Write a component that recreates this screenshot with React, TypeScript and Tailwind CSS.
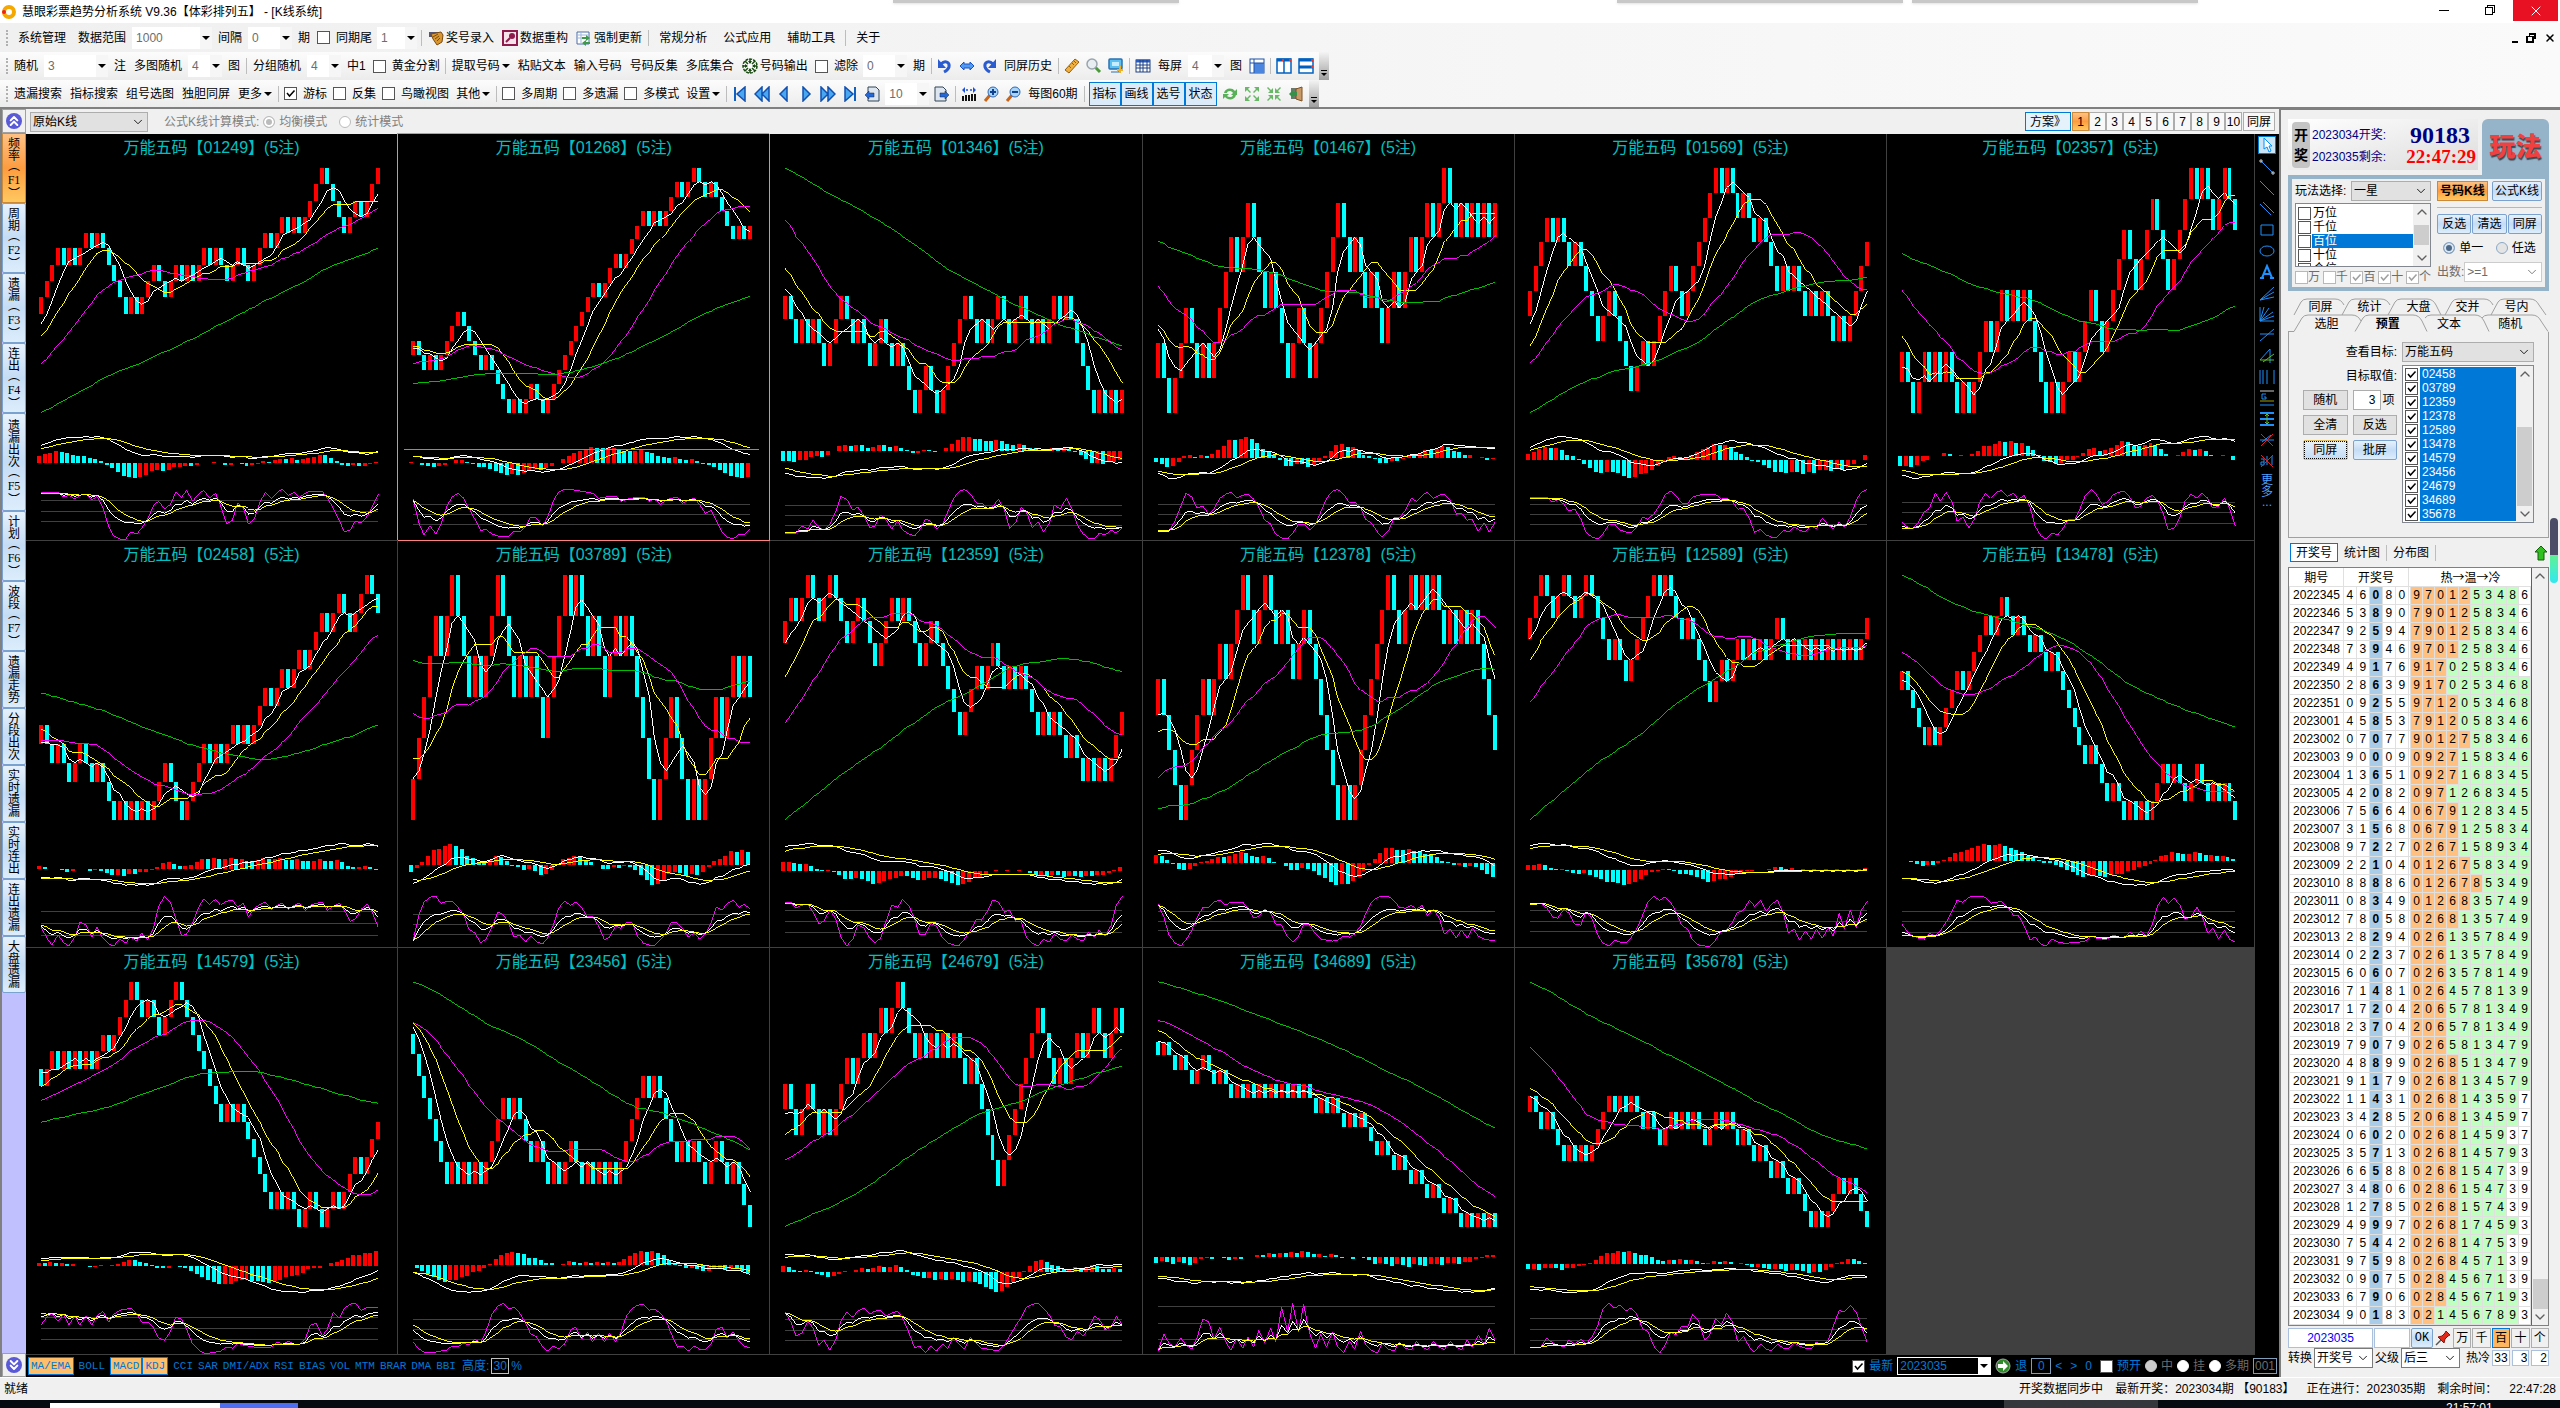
import type { ReactNode } from "react";
import { ChevronDown, ChevronUp, ChevronsDown, ChevronsUp, X } from "lucide-react";

type Chart = { code: string; start: number; ma: number[]; steps: string; active?: boolean };

// start: opening level, ma: 5/10/20/60 averages at the first bar, steps: one letter per draw
const charts: Chart[] = [
    { code: "01249", start: 0, ma: [-0.65, -1.4, -3.1, -6.1], steps: "UUUUDUDUUDUDDDDDUDUUUDDUUDUDUUDUDDUUDDUUUDUUDUDUUUUDDDDUUDUUU" },
    { code: "01268", start: 4, ma: [4.5, 4.6, 3.4, 2], steps: "UDDUDUUUUDDDDUDDDDUDUUDDUUUUUUUUUDUUUDUUUUDUDUUUDUUDDUDDDDUDU", active: true },
    { code: "01346", start: 4, ma: [5.3, 6.2, 8.3, 10.5], steps: "UDDUDUDDUUUDDUDDUUDDUDDDUUDDUUUUUDDUDUUDDUUDDUDUUDUDDDDDUDUDU" },
    { code: "01467", start: 1, ma: [2.4, 2.5, 3.6, 4.9], steps: "UDDUUUDDUDUUUUDUUDDDUDDDUUDDUUUUUDDUDDUDDUUDUUDUUDUUDDUDUDUDU" },
    { code: "01569", start: 3, ma: [2.7, 1.8, 1.1, -0.9], steps: "UUUUDUDDUDDDDUUDDDDUUDUUUUDDUUUUUUDUDDUDDUDDDUDUDDUDUDDUDUUUU" },
    { code: "02357", start: 1, ma: [1.5, 2.5, 4, 5.2], steps: "UDDUUDUDUDDUDUUUDUUDUDUDDDDUDUUDUUUDDUUUUDDUUUDDDUUUUDUDDUUDD" },
    { code: "02458", start: 4, ma: [4.1, 4.8, 4.2, 6.7], steps: "UDDUDDUUDDUDDDUDUDUDUUUDDDUUUUDUDUUDUDUUUDUUDUUDUUUDUUDDUUUDD" },
    { code: "03789", start: 0, ma: [1, 1.5, 2.6, 3.9], steps: "UUUUUDUUDDDUDUUUDDDUDUDDUUUUDUDDUDDUUDUDDDDDUUUDDDUDUUUDUUDUD" },
    { code: "12359", start: 6, ma: [6, 4.5, 2.5, -1.7], steps: "UUDUUDDUUDDDUUDDDUUUDUDDDUUDDDDDUUUDUUDDUDUDDDUDUDDUDDUDUDUUU" },
    { code: "12378", start: 3, ma: [3, 2.5, 1.2, 0.3], steps: "UDDDDUUUUDUUDUUUDDUUDDUDDUUDDDDDDUDUUUUUUUDDUUDUDUDDUDUDUDDDD" },
    { code: "12589", start: 3, ma: [3, 2, 0, -5.5], steps: "UUUDDUUDDUUDDDDUDDUUUUUDUDDDUDDDDUUDUUDUDUDUUDDUDUDUDUDUDUDUU" },
    { code: "13478", start: 7, ma: [7.5, 8, 9, 13.2], steps: "UDDDDUDUUUUDUUUUDUUDDUDDUDDUDDDDDDUDDDUDDUDUDUUUDUDDUUDDUDUDD" },
    { code: "14579", start: 9, ma: [8.8, 8, 7.2, 6], steps: "DUUDUDUDUDUUDUUUUDDUDDUUUDDDDDDDDUDUDDDDDDUDUDDUUDDUUDUUUDUUU" },
    { code: "23456", start: 9, ma: [9.3, 9.5, 9.5, 11.4], steps: "DDDDDDDUDUDUDUUUUDUDDDUDDUDUUDDUDUDUDUUUUUDUDDDDUDUDDUUDDUDDD" },
    { code: "24679", start: 3, ma: [2.8, 2, 1, -1.6], steps: "UDDUUDDUDUUUDUUDUUDUUDDDUDUDUDUDDUDDDDDUUUUUUUDDDUDUUDUUDDUUD" },
    { code: "34689", start: 13, ma: [13, 13.8, 14.5, 17.2], steps: "DUDDUDDUUDDUDDUDUDUDUDUDUDUDDUDUDDUDUDDDUDDUDDUDDUDDUDDUDUDUD" },
    { code: "35678", start: 7, ma: [8, 8.5, 11, 15], steps: "UDDUDDDUDUDUUUUDUDUDDUDDUUDUDUDDUUDUDDUDDUDDUDDUDDDUDUUUDUDDD" },
];

const BARS = 61;
const X0 = 15;
const DX = 338 / 60;

const mean = (values: number[], end: number, n: number) => {
    let sum = 0;
    for (let i = end - n + 1; i <= end; i++) sum += values[i];
    return sum / n;
};

const ema = (values: number[], n: number) => {
    const out = [values[0]];
    for (let i = 1; i < values.length; i++) out.push(out[i - 1] + ((values[i] - out[i - 1]) * 2) / (n + 1));
    return out;
};

const compute = (chart: Chart) => {
    const closes: number[] = [];
    let level = chart.start;
    for (const s of chart.steps) {
        level += s === "U" ? 1 : -1;
        closes.push(level);
    }
    const [m5, m10, m20, m60] = chart.ma;
    const b1 = (m5 * 5 - closes[0]) / 4;
    const b2 = 2 * m10 - m5;
    const b3 = 2 * m20 - m10;
    const b4 = 1.5 * m60 - 0.5 * m20;
    const history = [
        ...Array(40).fill(b4),
        ...Array(10).fill(b3),
        ...Array(5).fill(b2),
        ...Array(4).fill(b1),
    ] as number[];
    const all = [...history, ...closes];
    const off = history.length;
    const line = (n: number) => closes.map((_, i) => mean(all, off + i, n));

    const fast = ema(all, 12);
    const slow = ema(all, 26);
    const dif = all.map((_, i) => fast[i] - slow[i]);
    const dea = ema(dif, 9);

    let k = 50;
    let d = 50;
    const kdj = all.map((c, i) => {
        const win = all.slice(Math.max(0, i - 9), i + 1);
        const lo = Math.min(...win);
        const hi = Math.max(...win);
        const rsv = hi === lo ? 50 : ((c - lo) / (hi - lo)) * 100;
        k = (2 * k + rsv) / 3;
        d = (2 * d + k) / 3;
        return [k, d, 3 * k - 2 * d];
    });

    return {
        closes,
        ma: [line(5), line(10), line(20), line(60)],
        dif: dif.slice(off),
        dea: dea.slice(off),
        hist: dif.slice(off).map((v, i) => (v - dea[off + i]) * 2),
        kdj: [0, 1, 2].map((n) => kdj.slice(off).map((v) => v[n])),
    };
};

const scale = (values: number[], top: number, bottom: number) => {
    const lo = Math.min(...values);
    const hi = Math.max(...values);
    return (v: number) => Math.round(bottom - ((v - lo) / (hi - lo)) * (bottom - top));
};

const Line = ({ values, y, color }: { values: number[]; y: (v: number) => number; color: string }) => (
    <polyline
        fill="none"
        stroke={color}
        strokeWidth="1"
        points={values.map((v, i) => `${Math.round(X0 + i * DX)},${y(v)}`).join(" ")}
    />
);

const KChart = ({ chart }: { chart: Chart }) => {
    const c = compute(chart);
    const opens = [chart.start, ...c.closes.slice(0, BARS - 1)];
    const y = scale([...opens, ...c.closes, ...c.ma.flat()], 34, 280);
    const ym = scale([...c.dif, ...c.dea, ...c.hist, 0], 304, 346);
    const yk = scale([...c.kdj.flat(), 20, 80], 357, 407);
    return (
        <section className={`relative contain-size border-r border-b ${chart.active ? "z-10 border-[#ff8080] shadow-[-1px_-1px_0_#ff8080]" : "border-[#404040]"}`}>
            <h3 className="absolute inset-x-0 top-0.5 text-center text-base leading-6 text-[#00c0c0]">
                万能五码【{chart.code}】(5注)
            </h3>
            <svg viewBox="0 0 372 408" preserveAspectRatio="none" className="block size-full" shapeRendering="crispEdges">
                {c.closes.map((v, i) => {
                    const up = v > opens[i];
                    const top = y(Math.max(v, opens[i]));
                    return (
                        <rect key={i} x={Math.round(X0 + i * DX) - 2} y={top} width="4" height={y(Math.min(v, opens[i])) - top} fill={up ? "#ff0000" : "#00ffff"} />
                    );
                })}
                <Line values={c.ma[0]} y={y} color="#ffffff" />
                <Line values={c.ma[1]} y={y} color="#ffff00" />
                <Line values={c.ma[2]} y={y} color="#ff00ff" />
                <Line values={c.ma[3]} y={y} color="#00c000" />
                {c.hist.map((v, i) => (
                    <rect
                        key={i}
                        x={Math.round(X0 + i * DX) - 4}
                        y={Math.min(ym(v), ym(0))}
                        width="4"
                        height={Math.abs(ym(v) - ym(0))}
                        fill={v > (c.hist[i - 1] ?? 0) ? "#ff0000" : "#00ffff"}
                    />
                ))}
                <Line values={c.dif} y={ym} color="#ffffff" />
                <Line values={c.dea} y={ym} color="#ffff00" />
                {[80, 50, 20].map((v) => (
                    <line key={v} x1={X0} x2={X0 + 338} y1={yk(v)} y2={yk(v)} stroke="#404040" />
                ))}
                <Line values={c.kdj[2]} y={yk} color="#ff00ff" />
                <Line values={c.kdj[0]} y={yk} color="#ffffff" />
                <Line values={c.kdj[1]} y={yk} color="#ffff00" />
                {chart.active && <line x1="6" x2="362" y1="317" y2="317" stroke="#8080ff" />}
            </svg>
        </section>
    );
};

const glyphs: Record<string, ReactNode> = {
    hand: <><path d="M1 2h9v5H1z" fill="#557" /><path d="M3 4l10-2 2 3-1 7-5 3-4-6z" fill="#d9962f" stroke="#7a4a10" /><path d="M5 7l5-3M7 9l4-3M9 11l3-3" stroke="#7a4a10" /></>,
    key: <><rect x="1" y="1" width="14" height="14" fill="#f7e3ea" stroke="#8e1b4b" strokeWidth="2" /><circle cx="10" cy="6" r="3" fill="#8e1b4b" /><path d="M8 8l-4 4" stroke="#8e1b4b" strokeWidth="2" /></>,
    sheet: <><path d="M1 2h12v12H1z" fill="#fff" stroke="#4a6ea9" /><path d="M1 5h12M1 8h12M5 2v12" stroke="#9db7dd" /><path d="M6 7h4V5l4 3-4 3V9H6zM14 12h-4v-2l-4 3 4 3v-2h4z" fill="#3c9b4b" /></>,
    wheel: <><circle cx="8" cy="8" r="7" fill="#fff" stroke="#184a10" strokeWidth="1.5" strokeDasharray="3 1" /><path d="M8 1v4M8 11v4M1 8h4M11 8h4M3 3l3 3M13 3l-3 3M3 13l3-3M13 13l-3-3" stroke="#184a10" strokeWidth="1.5" /><path d="M6 3l2 3 2-3M6 13l2-3 2 3M3 6l3 2-3 2M13 6l-3 2 3 2" fill="#184a10" /></>,
    undo: <><path d="M4 6c4-4 9-2 8 3-1 3-3 4-5 5" fill="none" stroke="#2a5cd0" strokeWidth="3" /><path d="M1 1v9h8z" fill="#2a5cd0" /></>,
    redo: <><path d="M12 6C8 2 3 4 4 9c1 3 3 4 5 5" fill="none" stroke="#2a5cd0" strokeWidth="3" /><path d="M15 1v9H7z" fill="#2a5cd0" /></>,
    both: <path d="M1 8l4-4v2h6V4l4 4-4 4v-2H5v2z" fill="#4f9bf0" stroke="#1c50c8" />,
    ruler: <><path d="M1 12L11 1l4 3L5 15z" fill="#f0b040" stroke="#96600c" /><path d="M5 8l2 2M8 5l2 2M10 3l2 2" stroke="#96600c" /></>,
    lens: <><path d="M9 9l5 5" stroke="#4a9a3a" strokeWidth="3" /><circle cx="6" cy="6" r="5" fill="#e8edf2" stroke="#9aa4ae" strokeWidth="1.5" /></>,
    screen: <><rect x="1" y="1" width="13" height="10" rx="1" fill="#5cc0f0" stroke="#2a70b0" strokeWidth="1.5" /><path d="M4 4h7v4H4z" fill="#c8ecff" /><path d="M3 14h8v-3" stroke="#2a70b0" fill="none" /><path d="M12 8v7M9 12h6" stroke="#f0b020" strokeWidth="2" /></>,
    grid: <><rect x="1" y="2" width="14" height="12" fill="#fff" stroke="#204080" /><path d="M1 3h14" stroke="#2a5cc0" strokeWidth="3" /><path d="M1 7h14M1 10h14M5 2v12M8 2v12M12 2v12" stroke="#204080" /></>,
    month: <><rect x="1" y="1" width="14" height="14" fill="#fff" stroke="#1c50a8" /><rect x="5" y="5" width="10" height="10" fill="#4a86e0" /><path d="M1 5h14M5 1v14" stroke="#1c50a8" /></>,
    cols: <><rect x="1" y="1" width="14" height="14" fill="#fff" stroke="#0060c0" strokeWidth="1.5" /><path d="M8 1v14" stroke="#0060c0" strokeWidth="1.5" /><path d="M1 2h14" stroke="#0060c0" strokeWidth="3" /><path d="M6 2h2M13 2h2" stroke="#f03020" strokeWidth="2" /></>,
    rows: <><rect x="1" y="1" width="14" height="14" fill="#fff" stroke="#0060c0" strokeWidth="1.5" /><path d="M1 2h14M1 9h14" stroke="#0060c0" strokeWidth="3" /><path d="M13 2h2M13 9h2" stroke="#f03020" strokeWidth="2" /></>,
    first: <><path d="M3 1v14" stroke="#1060c0" strokeWidth="2" /><path d="M13 1v14L5 8z" fill="#49a6f0" stroke="#1050b0" strokeWidth="1.5" /></>,
    rewind: <path d="M8 1v14L1 8zM15 1v14L8 8z" fill="#49a6f0" stroke="#1050b0" strokeWidth="1.5" />,
    prev: <path d="M11 1v14L4 8z" fill="#49a6f0" stroke="#1050b0" strokeWidth="1.5" />,
    next: <path d="M5 1v14l7-7z" fill="#49a6f0" stroke="#1050b0" strokeWidth="1.5" />,
    forward: <path d="M1 1v14l7-7zM8 1v14l7-7z" fill="#49a6f0" stroke="#1050b0" strokeWidth="1.5" />,
    last: <><path d="M13 1v14" stroke="#1060c0" strokeWidth="2" /><path d="M3 1v14l8-7z" fill="#49a6f0" stroke="#1050b0" strokeWidth="1.5" /></>,
    pageBack: <><path d="M4 1h8l3 3v11H4z" fill="#dde6f0" stroke="#345" /><path d="M1 9l4-4v2h5v4H5v2z" fill="#2468d8" stroke="#124" strokeWidth=".5" /></>,
    pageNext: <><path d="M1 1h8l3 3v11H1z" fill="#dde6f0" stroke="#345" /><path d="M15 9l-4-4v2H6v4h5v2z" fill="#2468d8" stroke="#124" strokeWidth=".5" /></>,
    bars: <><path d="M2 15v-5M5 15V9M8 15v-6M11 15V8M14 15V8" stroke="#111" strokeWidth="2" /><path d="M1 4l3-3v6zM15 4l-3-3v6z" fill="#1c50e0" /><path d="M5 4h2M9 4h2" stroke="#1c50e0" strokeWidth="1.5" /></>,
    zoomIn: <><path d="M7 9l-5 6" stroke="#c86418" strokeWidth="3" /><circle cx="10" cy="6" r="5" fill="#a8d4f8" stroke="#2c68b8" /><path d="M10 3v6M7 6h6" stroke="#104090" strokeWidth="2" /></>,
    zoomOut: <><path d="M7 9l-5 6" stroke="#c86418" strokeWidth="3" /><circle cx="10" cy="6" r="5" fill="#a8d4f8" stroke="#2c68b8" /><path d="M7 6h6" stroke="#104090" strokeWidth="2" /></>,
    sync: <path d="M2 7c1-5 8-6 11-2l2-2v6H9l2-2C9 4 5 5 5 7zM14 9c-1 5-8 6-11 2l-2 2V8h6l-2 2c2 2 6 1 6-1z" fill="#58b058" />,
    expand: <path d="M1 1h5L4 3l3 3-1 1-3-3-2 2zM15 1v5l-2-2-3 3-1-1 3-3-2-2zM1 15v-5l2 2 3-3 1 1-3 3 2 2zM15 15h-5l2-2-3-3 1-1 3 3 2-2z" fill="#68b868" />,
    shrink: <path d="M7 7H2l2-2-3-3 1-1 3 3 2-2zM9 7V2l2 2 3-3 1 1-3 3 2 2zM7 9v5l-2-2-3 3-1-1 3-3-2-2zM9 9h5l-2 2 3 3-1 1-3-3-2 2z" fill="#68b868" />,
    door: <><path d="M3 2h7v11H3z" fill="#6f786f" /><path d="M8 3l6-2v14l-6-2z" fill="#c89a68" stroke="#805020" /><path d="M1 8l4-4v2h4v4H5v2z" fill="#389048" /></>,
    go: <><circle cx="8" cy="8" r="7" fill="#2f8a2a" stroke="#a8a8a8" /><path d="M3 6h5V3l5 5-5 5v-3H3z" fill="#fff" /></>,
    pin: <><path d="M1 15l6-6" stroke="#555" strokeWidth="1.5" /><path d="M3 7l4-1 3-3 1-2 4 4-2 1-3 3-1 4z" fill="#e02818" stroke="#901008" /></>,
    up: <path d="M8 1l6 6h-3v8H5V7H2z" fill="#30c020" stroke="#106008" />,
};

const Icon = ({ name }: { name: string }) => (
    <svg viewBox="0 0 16 16" className="size-4 shrink-0">{glyphs[name]}</svg>
);

const Sep = () => <span className="h-4 w-px bg-[#bdbdbd]" />;
const Grip = () => <span className="ml-1.5 h-4 border-l-2 border-dotted border-[#b0b0b0]" />;
const Txt = ({ children, menu }: { children: ReactNode; menu?: boolean }) => (
    <button className={`flex items-center gap-0.5 whitespace-nowrap ${menu ? "px-1.5" : "px-0.5"}`}>{children}</button>
);
const IconBtn = ({ name }: { name: string }) => (
    <button aria-label={name} className="px-px"><Icon name={name} /></button>
);
const Caret = () => <span className="border-x-4 border-t-4 border-x-transparent border-t-black" />;

const Drop = ({ value, width, label }: { value: string; width: string; label: string }) => (
    <span className={`relative flex h-[22px] items-center bg-white ${width}`}>
        <select aria-label={label} className="size-full appearance-none bg-transparent pl-1 text-[#6d6d6d] outline-none">
            <option>{value}</option>
        </select>
        <span className="pointer-events-none absolute inset-y-0 right-0 flex w-3 items-center justify-center bg-[#f6f6f6]"><Caret /></span>
    </span>
);

const Tick = ({ label, checked }: { label: string; checked?: boolean }) => (
    <label className="flex items-center gap-1.5 whitespace-nowrap px-px">
        <Box checked={checked} />
        {label}
    </label>
);

const Box = ({ checked, muted, label }: { checked?: boolean; muted?: boolean; label?: string }) => (
    <span className={`relative size-[13px] shrink-0 border bg-white ${muted ? "border-[#b8b8b8] text-[#a0a0a0]" : "border-[#555555] text-black"}`}>
        <input type="checkbox" aria-label={label} defaultChecked={checked} disabled={muted} className="absolute inset-0 appearance-none" />
        {checked && (
            <svg viewBox="0 0 11 11" className="pointer-events-none absolute inset-0"><path d="M2 5l2.500 3L9.500 2.500" fill="none" stroke="currentColor" strokeWidth="1.500" /></svg>
        )}
    </span>
);

const Radio = ({ label, name, checked, tone }: { label: string; name: string; checked?: boolean; tone: string }) => (
    <label className="flex items-center gap-1">
        <input type="radio" name={name} defaultChecked={checked} className={`size-3 appearance-none rounded-full border ${tone}`} />
        {label}
    </label>
);

const Combo = ({ value, className, label }: { value: string; className: string; label: string }) => (
    <span className={`relative block h-5 shrink-0 border ${className}`}>
        <select aria-label={label} className="block size-full appearance-none bg-transparent pl-0.5 outline-none">
            <option>{value}</option>
        </select>
        <ChevronDown className="pointer-events-none absolute top-0.5 right-0.5 size-3.5" strokeWidth={1.5} />
    </span>
);

const blue = "border border-[#7ba2ce] bg-linear-to-b from-[#e6f1fc] via-[#c4dcf5] to-[#dcedfc] rounded-xs";
const orange = "border border-[#c98a3c] bg-linear-to-b from-[#fdc183] via-[#fd9c3f] to-[#ffc860]";
const plain = "border border-[#adadad] bg-[#e1e1e1]";

const Toolbars = () => (
    <header className="bg-linear-to-r from-[#f0f0f0] to-[#fafafa]">
        <div className="flex h-[29px] items-center gap-1">
            <Grip />
            <Txt menu>系统管理</Txt>
            <Txt>数据范围</Txt>
            <Drop label="数据范围" value="1000" width="w-20" />
            <Txt>间隔</Txt>
            <Drop label="间隔" value="0" width="w-11" />
            <Txt>期</Txt>
            <Tick label="同期尾" />
            <Drop label="同期尾" value="1" width="w-10" />
            <Sep />
            <Txt><Icon name="hand" />奖号录入</Txt>
            <Txt><Icon name="key" />数据重构</Txt>
            <Txt><Icon name="sheet" />强制更新</Txt>
            <Sep />
            <Txt menu>常规分析</Txt>
            <Txt menu>公式应用</Txt>
            <Txt menu>辅助工具</Txt>
            <Sep />
            <Txt menu>关于</Txt>
            <span className="ml-auto flex items-center gap-2 pr-1">
                <span className="mt-2 h-0.5 w-1.5 bg-black" />
                <svg viewBox="0 0 9 9" className="size-2.5" fill="none" stroke="#000" shapeRendering="crispEdges"><path d="M3 3V1h5v4H6M1 3h5v5H1z" strokeWidth="1.5" /></svg>
                <X className="size-3" strokeWidth={3} />
            </span>
        </div>
        <div className="flex h-7 items-center">
            <div className="flex h-full items-center gap-1 bg-linear-to-b from-[#fcfcfc] to-[#ececec]">
                <Grip />
                <Txt>随机</Txt>
                <Drop label="随机" value="3" width="w-16" />
                <Txt>注</Txt>
                <Txt>多图随机</Txt>
                <Drop label="多图随机" value="4" width="w-[34px]" />
                <Txt>图</Txt>
                <Sep />
                <Txt>分组随机</Txt>
                <Drop label="分组随机" value="4" width="w-[34px]" />
                <Txt>中1</Txt>
                <Tick label="黄金分割" />
                <Sep />
                <Txt>提取号码<Caret /></Txt>
                <Txt>粘贴文本</Txt>
                <Txt>输入号码</Txt>
                <Txt>号码反集</Txt>
                <Txt>多底集合</Txt>
                <Txt><Icon name="wheel" />号码输出</Txt>
                <Tick label="滤除" />
                <Drop label="滤除" value="0" width="w-11" />
                <Txt>期</Txt>
                <Sep />
                <IconBtn name="undo" />
                <IconBtn name="both" />
                <IconBtn name="redo" />
                <Txt>同屏历史</Txt>
                <Sep />
                <IconBtn name="ruler" />
                <IconBtn name="lens" />
                <IconBtn name="screen" />
                <Sep />
                <IconBtn name="grid" />
                <Txt>每屏</Txt>
                <Drop label="每屏" value="4" width="w-9" />
                <Txt>图</Txt>
                <IconBtn name="month" />
                <Sep />
                <IconBtn name="cols" />
                <IconBtn name="rows" />
                <Overflow />
            </div>
        </div>
        <div className="flex h-[27px] items-center">
            <div className="flex h-full items-center gap-1 bg-linear-to-b from-[#fcfcfc] to-[#ececec]">
                <Grip />
                <Txt>遗漏搜索</Txt>
                <Txt>指标搜索</Txt>
                <Txt>组号选图</Txt>
                <Txt>独胆同屏</Txt>
                <Txt>更多<Caret /></Txt>
                <Sep />
                <Tick label="游标" checked />
                <Tick label="反集" />
                <Tick label="鸟瞰视图" />
                <Txt>其他<Caret /></Txt>
                <Sep />
                <Tick label="多周期" />
                <Tick label="多遗漏" />
                <Tick label="多模式" />
                <Txt>设置<Caret /></Txt>
                <Sep />
                <IconBtn name="first" />
                <IconBtn name="rewind" />
                <IconBtn name="prev" />
                <IconBtn name="next" />
                <IconBtn name="forward" />
                <IconBtn name="last" />
                <IconBtn name="pageBack" />
                <Drop label="步长" value="10" width="w-11" />
                <IconBtn name="pageNext" />
                <Sep />
                <IconBtn name="bars" />
                <IconBtn name="zoomIn" />
                <IconBtn name="zoomOut" />
                <Txt>每图60期</Txt>
                <Sep />
                <div className="flex">
                    {["指标", "画线", "选号", "状态"].map((t) => (
                        <button key={t} className="h-6 w-8 border border-[#0078d7] bg-[#dcebf9]">{t}</button>
                    ))}
                </div>
                <IconBtn name="sync" />
                <IconBtn name="expand" />
                <IconBtn name="shrink" />
                <IconBtn name="door" />
                <Overflow />
            </div>
        </div>
    </header>
);

const Overflow = () => (
    <span className="flex h-full w-2.5 flex-col items-center justify-end gap-0.5 bg-linear-to-b from-[#f4f4f4] to-[#a0a0a0] pb-1">
        <span className="h-px w-1.5 bg-black" />
        <span className="border-x-3 border-t-3 border-x-transparent border-t-black" />
    </span>
);

const sideTabs = [
    ["频率", "F1"], ["周期", "F2"], ["遗漏", "F3"], ["连出", "F4"], ["遗漏出次", "F5"], ["计划", "F6"], ["波段", "F7"],
    ["遗漏走势"], ["分段出次"], ["实时遗漏"], ["实时连出"], ["连出遗漏"], ["大盘遗漏"],
];

const SideTabs = () => (
    <nav className="flex w-6 shrink-0 flex-col bg-[#c0c0ff] font-['Liberation_Serif','Noto_Sans_CJK_SC',serif]">
        <button aria-label="上翻" className="flex h-6 items-center justify-center border border-[#a0a0a0] bg-[#f0f0f0]">
            <ChevronsUp className="size-4 rounded-full bg-[#5a5ad8] text-white" strokeWidth={3} />
        </button>
        {sideTabs.map(([name, key], i) => (
            <button
                key={name}
                className={`flex flex-col items-center justify-center leading-3 ${i === 0 ? orange : blue} ${!key ? "h-[57px]" : name.length > 2 ? "h-[98px]" : "h-[70px]"}`}
            >
                {[...name].map((ch, n) => <span key={n}>{ch}</span>)}
                {key && (
                    <>
                        <span className="h-2 leading-2">︵</span>
                        <span className="my-1">{key}</span>
                        <span className="h-2 leading-2">︶</span>
                    </>
                )}
            </button>
        ))}
        <button aria-label="下翻" className="mt-auto flex h-6 items-center justify-center border border-[#a0a0a0] bg-[#f0f0f0]">
            <ChevronsDown className="size-4 rounded-full bg-[#5a5ad8] text-white" strokeWidth={3} />
        </button>
    </nav>
);

const tools: ReactNode[] = [
    <><path d="M2 2l12 12" /><path d="M1 1h2v2H1zM13 13h2v2h-2z" stroke="#ccc" /></>,
    <path d="M1 1l14 14" />,
    <path d="M1 3l11 11M4 1l11 11" />,
    <path d="M2 3h12v10H2z" />,
    <ellipse cx="8" cy="8" rx="7" ry="5" />,
    <path d="M3 14L8 2l5 12M5 10h6M1 14h4M11 14h4" strokeWidth="2" />,
    <path d="M1 15L15 2M1 15l14-8M1 15l14-3" />,
    <path d="M1 1v14h14M1 15L5 1M1 15L10 2M1 15L14 6M1 15l14-5" />,
    <path d="M1 14L15 2M1 7h14" />,
    <><path d="M1 12L11 1v14" /><path d="M1 12h14M4 14l11-8" stroke="#60c030" /></>,
    <path d="M1 1v14M4 1v14M8 1v14M15 1v14" />,
    <><path d="M1 1h14" stroke="#ccc" /><path d="M7 4H3v5h4V7H5" /><path d="M1 11h14" stroke="#a0a000" /><path d="M1 15h14" /></>,
    <><path d="M1 2h14M1 8h14M1 14h14" strokeWidth="2" /><path d="M8 3v10M6 5l2-2 2 2M6 11l2 2 2-2" stroke="#60c030" /></>,
    <><path d="M1 8h14M3 10l9-7" /><path d="M2 2l12 12M14 2L2 14" stroke="#e02020" /></>,
    <><path d="M2 6h3v6H2V9h3M8 3v9M13 3v9" /><path d="M2 2l12 12M14 2L2 14" stroke="#e02020" /></>,
];

const DrawTools = () => (
    <aside className="flex w-6 shrink-0 flex-col items-center gap-[5px] bg-black pt-0.5">
        <button aria-label="选择" className="flex h-[18px] w-[18px] items-center justify-center border border-[#0078d7] bg-[#cce4f7]">
            <svg viewBox="0 0 16 16" className="size-4" fill="#fff" stroke="#0090ff"><path d="M5 1v11l3-2 2 5 2-1-2-5h3z" /></svg>
        </button>
        {tools.map((t, i) => (
            <button key={i} aria-label={`工具${i + 1}`}>
                <svg viewBox="0 0 16 16" className="size-4" fill="none" stroke="#1e90ff">{t}</svg>
            </button>
        ))}
        <button className="flex flex-col items-center leading-3 text-[#4ea0ff]"><span>更</span><span>多</span><span className="leading-2">...</span></button>
    </aside>
);

const on = "h-[18px] border border-[#0078d7] bg-[#ffbf6a] px-0.5";

const IndicatorBar = () => (
    <div className="flex h-[22px] items-center gap-1.5 bg-black pr-0.5 pl-0.5 text-[#0078d7]">
        <div className="flex items-center gap-[5px] font-['Liberation_Mono',monospace] text-[11px]">
            <button className={on}>MA/EMA</button>
            <button>BOLL</button>
            <div className="flex">
                <button className={on}>MACD</button>
                <button className={on}>KDJ</button>
            </div>
            {["CCI", "SAR", "DMI/ADX", "RSI", "BIAS", "VOL", "MTM", "BRAR", "DMA", "BBI"].map((t) => <button key={t}>{t}</button>)}
        </div>
        <label className="flex items-center gap-0.5">高度:<input defaultValue="30" className="h-4 w-[18px] border border-[#c0c0c0] bg-black text-center" />%</label>
        <div className="ml-auto flex items-center gap-1">
            <label className="flex items-center gap-1"><Box checked />最新</label>
            <span className="relative flex h-[18px] w-[94px] border border-white">
                <select aria-label="期号" className="size-full appearance-none bg-black pl-0.5 outline-none"><option>2023035</option></select>
                <span className="pointer-events-none absolute inset-y-0 right-0 flex w-3 items-center justify-center bg-white"><Caret /></span>
            </span>
            <Icon name="go" />
            <label className="flex items-center gap-1">退<input defaultValue="0" className="h-4 w-5 border border-[#7f9db9] bg-black text-center" /></label>
            <button>&lt;</button>
            <button className="pl-1">&gt;</button>
            <span className="px-1">0</span>
            <label className="flex items-center gap-1"><Box />预开</label>
            <span className="flex gap-1 text-[#6d6d6d]">
                <Radio name="kind" label="中" checked tone="border-[#ccc] bg-[#ccc]" />
                <Radio name="kind" label="挂" tone="border-white bg-white" />
                <Radio name="kind" label="多期" tone="border-white bg-white" />
            </span>
            <input aria-label="期数" defaultValue="001" className="h-4 w-6 border border-[#7f9db9] bg-black text-center text-[#6d6d6d]" />
        </div>
    </div>
);

const draws = `2022345 46080 9701253486 5 9
2022346 53890 7901258346 5 9
2022347 92594 7901258346 5 9
2022348 73946 9701258346 4 9
2022349 49176 9170258346 3 9
2022350 28639 9170253468 3 10
2022351 09255 9712053468 4 10
2023001 45853 7912058346 4 10
2023002 07077 9012758346 5 10
2023003 90009 0927158346 4 10
2023004 13651 0927168345 4 10
2023005 42082 0971268345 3 10
2023006 75664 0679128345 4 10
2023007 31568 0679125834 4 10
2023008 97227 0267158934 4 10
2023009 22104 0126758349 5 10
2023010 88886 0126785349 6 10
2023011 08349 0126835749 5 10
2023012 78058 0268135749 4 10
2023013 28294 0261357849 3 10
2023014 02237 0261357849 3 10
2023015 60607 0263578149 3 10
2023016 71481 0264578139 3 10
2023017 17204 2065781349 3 10
2023018 23704 2065781349 3 10
2023019 79079 0265813479 3 10
2023020 48899 0268513479 4 10
2023021 91179 0268134579 4 10
2023022 11431 0268143597 4 9
2023023 34285 2068134597 4 9
2023024 06020 0268145937 4 8
2023025 35713 0268145793 4 9
2023026 66588 0268154739 4 8
2023027 34806 0286154739 4 8
2023028 12785 0268157439 4 8
2023029 49997 0268174593 4 9
2023030 75442 0268147539 4 8
2023031 97598 0268457139 4 8
2023032 09075 0284567139 3 8
2023033 67906 0284567193 3 9
2023034 90183 0214567893 2 9`.split("\n").map((r) => r.split(" "));

const DrawTable = () => (
    <div className="flex border border-[#808080]">
        <table className="w-full table-fixed border-collapse bg-white text-center">
            <colgroup>
                <col />
                {[...Array(5)].map((_, i) => <col key={i} className="w-[13px]" />)}
                <col className="w-0.5" />
                {[...Array(10)].map((_, i) => <col key={i} className="w-3" />)}
            </colgroup>
            <thead>
                <tr className="h-[18px] font-['Noto_Sans_CJK_SC',sans-serif] leading-4">
                    <th className="border-r border-[#e0e0e0] p-0 font-normal">期号</th>
                    <th colSpan={5} className="border-r border-[#e0e0e0] p-0 font-normal">开奖号</th>
                    <th />
                    <th colSpan={10} className="p-0 font-normal">热→温→冷</th>
                </tr>
            </thead>
            <tbody>
                {draws.map(([id, nums, heat, hot, warm]) => (
                    <tr key={id} className="h-[18px] leading-4">
                        <td className="border border-[#e0e0e0] p-0">{id}</td>
                        {[...nums].map((n, i) => (
                            <td key={i} className={`border border-[#e0e0e0] p-0 ${i === 2 ? "bg-[#a9cce8] font-bold" : ""}`}>{n}</td>
                        ))}
                        <td className="border border-[#e0e0e0] p-0" />
                        {[...heat].map((n, i) => (
                            <td key={i} className={`border border-[#e0e0e0] p-0 ${i < +hot ? "bg-[#ffc080]" : i < +warm ? "bg-[#c0ffc0]" : ""}`}>{n}</td>
                        ))}
                    </tr>
                ))}
            </tbody>
        </table>
        <ScrollBar className="border-l border-[#606060]" gap="grow-[22]" thumb="h-[30px]" tail="grow-0" />
    </div>
);

const ScrollBar = ({ className = "", gap, thumb, tail }: { className?: string; gap: string; thumb: string; tail: string }) => (
    <div className={`flex w-[17px] shrink-0 flex-col items-center bg-[#f0f0f0] text-[#606060] ${className}`}>
        <ChevronUp className="size-4 shrink-0" />
        <span className={gap} />
        <span className={`w-[15px] bg-[#cdcdcd] ${thumb}`} />
        <span className={tail} />
        <ChevronDown className="size-4 shrink-0" />
    </div>
);

const PlayPanel = () => (
    <div>
        <div className="flex items-start gap-1">
            <div className="flex h-[51px] grow items-center bg-linear-to-br from-white to-[#dcdcdc] pl-1 text-[#000080]">
                <span className="flex h-[46px] w-[18px] flex-col items-center justify-center rounded bg-[#c4c4c4] text-sm leading-5 font-bold text-black"><span>开</span><span>奖</span></span>
                <div className="flex grow flex-col pl-0.5">
                    <div className="flex h-6 items-center justify-between pr-2">2023034开奖:<b className="font-['Liberation_Serif',serif] text-2xl leading-6">90183</b></div>
                    <div className="flex h-5 items-center justify-between pr-0.5">2023035剩余:<b className="font-['Liberation_Serif',serif] text-[19px] text-[#ff0000]">22:47:29</b></div>
                </div>
            </div>
            <button className="h-14 w-[67px] rounded-t-md bg-[#95b3c9] text-[26px] font-black text-[#f04040] text-shadow-[1px_2px_1px_rgb(0_0_0/0.6)]">玩法</button>
        </div>
        <div className="flex gap-1.5 border-4 border-[#95b3c9] px-[3px] py-0.5">
            <div className="flex w-[136px] shrink-0 flex-col gap-0.5">
                <div className="flex items-center whitespace-nowrap">玩法选择:<Combo label="玩法选择" value="一星" className="ml-auto w-20 border-[#adadad] bg-[#e1e1e1]" /></div>
                <div className="flex h-16 border border-[#828790] bg-white">
                    <ul className="flex grow flex-col overflow-hidden pt-0.5 leading-[14px]">
                        {["万位", "千位", "百位", "十位", "个位"].map((t, i) => (
                            <li key={t}><label className="flex h-[14px] items-center gap-px pl-0.5"><Box />
                                <span className={`grow pl-px ${i === 2 ? "bg-[#0078d7] text-white" : ""}`}>{t}</span></label></li>
                        ))}
                    </ul>
                    <ScrollBar gap="grow" thumb="h-5" tail="grow" />
                </div>
                <div className="flex items-center justify-between whitespace-nowrap text-[#6d6d6d]">
                    {["万", "千", "百", "十", "个"].map((t, i) => <label key={t} className="flex items-center"><Box checked={i > 1} muted />{t}</label>)}
                </div>
            </div>
            <div className="flex grow flex-col">
                <div className="flex gap-1">
                    <button className={`h-5 grow font-bold ${orange}`}>号码K线</button>
                    <button className={`h-5 grow ${blue}`}>公式K线</button>
                </div>
                <hr className="my-1.5 border-[#b8b8b8]" />
                <div className="flex gap-px">
                    {["反选", "清选", "同屏"].map((t) => <button key={t} className={`h-5 grow ${blue}`}>{t}</button>)}
                </div>
                <div className="flex h-7 items-center justify-around">
                    <Radio name="mode" label="单一" checked tone="border-[#8aa8c8] bg-[#4c6a88] shadow-[inset_0_0_0_2px_#dbe6f2]" />
                    <Radio name="mode" label="任选" tone="border-[#8aa8c8] bg-[#e4e4e4]" />
                </div>
                <div className="flex items-center text-[#6d6d6d]">出数:<Combo label="出数" value=">=1" className="grow border-[#cccccc] bg-white" /></div>
            </div>
        </div>
    </div>
);

const targets = ["02458", "03789", "12359", "12378", "12589", "13478", "14579", "23456", "24679", "34689", "35678"];

const TargetTabs = () => (
    <div className="mt-[7px]">
        <div className="relative">
            <svg viewBox="0 0 261 34" preserveAspectRatio="none" className="absolute inset-0 size-full" fill="none" stroke="#a0a0a0">
                <path d="M6 17L13 4q2-3 6-3h28q6 0 9 6M54 17L61 4q2-3 6-3h26q6 0 9 6M100 17L107 4q2-3 6-3h26q6 0 9 6l5 10M157 17L164 4q2-3 6-3h26q6 0 9 6M203 17L210 4q2-3 6-3h26q6 0 9 6l7 10" />
                <path d="M0 33.500h6L14 20q2-3 6-3h44q6 0 9 6M67 33.500L75 20q2-3 6-3h44q6 0 9 6l5 10.500M137 20q2-3 6-3h44q6 0 9 6l5 10.500M194 20q2-3 6-3h44q6 0 9 6l7 10.500" />
            </svg>
            <div className="relative flex h-[17px] items-center justify-around pr-2 pl-2">
                {["同屏", "统计", "大盘", "交并", "号内"].map((t) => <button key={t}>{t}</button>)}
            </div>
            <div className="relative flex h-[17px] items-center justify-around pr-2 pl-2">
                {["选胆", "预置", "文本", "随机"].map((t) => <button key={t} className={t === "预置" ? "font-bold" : ""}>{t}</button>)}
            </div>
        </div>
        <div className="flex h-[206px] justify-end gap-[5px] border border-t-0 border-[#a0a0a0] pt-2.5 pr-3.5">
            <div className="flex w-[94px] flex-col items-end gap-0.5">
                <span className="leading-5">查看目标:</span>
                <span className="leading-6">目标取值:</span>
                <div className="grid w-full grid-cols-2 gap-[5px]">
                    <button className={`h-5 ${plain}`}>随机</button>
                    <label className="flex items-center gap-0.5"><input defaultValue="3" className="h-5 w-7 border border-[#adadad] bg-white px-1 text-right" />项</label>
                    <button className={`h-5 ${plain}`}>全清</button>
                    <button className={`h-5 ${plain}`}>反选</button>
                    <button className="h-5 rounded-xs border border-[#e0c060] bg-linear-to-b from-[#e6f1fc] to-[#c4dcf5] outline-1 -outline-offset-2 outline-dotted outline-black">同屏</button>
                    <button className={`h-5 ${blue}`}>批屏</button>
                </div>
            </div>
            <div className="flex w-[132px] flex-col gap-[3px]">
                <Combo label="查看目标" value="万能五码" className="border-[#adadad] bg-[#e1e1e1]" />
                <div className="flex border border-[#828790] bg-white">
                    <ul className="grow py-px">
                        {targets.map((t) => (
                            <li key={t}><label className="flex h-[14px] items-center gap-0.5 pl-0.5"><Box checked />
                                <span className="grow bg-[#0078d7] pl-0.5 leading-[14px] text-white">{t}</span></label></li>
                        ))}
                    </ul>
                    <ScrollBar gap="grow-[44]" thumb="grow-[78]" tail="grow-0" />
                </div>
            </div>
        </div>
    </div>
);

const RightPanel = () => (
    <aside className="flex w-[281px] shrink-0 flex-col border-t border-l-2 border-[#808080] bg-[#f0f0f0] pt-[9px] pr-[11px] pl-[7px]">
        <PlayPanel />
        <TargetTabs />
        <div className="flex h-[29px] items-center gap-1.5 pl-0.5">
            <button className="h-[19px] w-12 border border-[#0078d7] bg-white">开奖号</button>
            <button>统计图</button>
            <Sep />
            <button>分布图</button>
            <Sep />
            <span className="ml-auto"><Icon name="up" /></span>
        </div>
        <DrawTable />
        <div className="mt-0.5 flex h-5 gap-px">
            <input aria-label="期号" defaultValue="2023035" className="w-[85px] border border-[#abc0dc] bg-white text-center text-[#0000ff]" />
            <input aria-label="号码" className="w-9 border border-[#abc0dc] bg-white" />
            <button className={`w-[22px] font-['Liberation_Mono',monospace] ${blue}`}>OK</button>
            <span className="self-center px-px"><Icon name="pin" /></span>
            {["万", "千", "百", "十", "个"].map((t) => (
                <button key={t} className={`grow border ${t === "百" ? "border-[#0078d7] bg-[#ffb560]" : "border-[#adadad] bg-[#f0f0f0]"}`}>{t}</button>
            ))}
        </div>
        <div className="flex items-center gap-0.5 whitespace-nowrap">
            转换<Combo label="转换" value="开奖号" className="w-[59px] border-[#7a7a7a] bg-white" />
            父级<Combo label="父级" value="后三" className="mr-1 w-[59px] border-[#7a7a7a] bg-white" />
            热冷
            {["33", "3", "2"].map((v) => <input key={v} aria-label="热冷" defaultValue={v} className="h-4 w-[18px] min-w-0 grow border border-[#abc0dc] bg-white pr-px text-right" />)}
        </div>
    </aside>
);

const App = () => {
    return (
        <div className="relative flex min-h-screen flex-col overflow-hidden bg-[#f0f0f0] font-['Liberation_Sans','Noto_Sans_CJK_SC',sans-serif] text-xs text-black">
            <div className="relative flex h-[23px] items-center bg-white">
                <span className="absolute top-0 left-[893px] h-[3px] w-[286px] bg-[#c8c8c8] shadow-sm" />
                <span className="absolute top-0 left-[1617px] h-[3px] w-[286px] bg-[#c8c8c8] shadow-sm" />
                <span className="absolute top-0 left-[1912px] h-[3px] w-[286px] bg-[#c8c8c8] shadow-sm" />
                <svg viewBox="0 0 16 16" className="mr-1.5 size-4"><circle cx="9" cy="8" r="5" fill="none" stroke="#f5a800" strokeWidth="4" /><circle cx="4" cy="8" r="2" fill="#f02020" /></svg>
                <h1>慧眼彩票趋势分析系统 V9.36【体彩排列五】 - [K线系统]</h1>
                <div className="ml-auto flex h-full items-start">
                    <button aria-label="最小化" className="flex h-5 w-[46px] items-center justify-center"><span className="h-px w-2.5 bg-black" /></button>
                    <button aria-label="还原" className="flex h-5 w-[46px] items-center justify-center">
                        <svg viewBox="0 0 10 10" className="size-2.5" fill="none" stroke="#000" shapeRendering="crispEdges"><path d="M2.500 2.500v-2h7v7h-2M.5 2.500h7v7h-7z" /></svg>
                    </button>
                    <button aria-label="关闭" className="mr-0.5 flex h-[21px] w-[45px] items-center justify-center bg-[#e81123] text-white"><X className="size-4" strokeWidth={1.5} /></button>
                </div>
            </div>
            <Toolbars />
            <main className="flex grow border-t-2 border-l-2 border-[#808080]">
                <SideTabs />
                <div className="flex grow flex-col">
                    <div className="flex h-[25px] items-center gap-1 pl-1 text-[#808080]">
                        <Combo label="K线" value="原始K线" className="mr-3 w-[118px] border-[#adadad] bg-[#e1e1e1] text-black" />
                        公式K线计算模式:
                        <Radio name="calc" label="均衡模式" checked tone="border-[#bcbcbc] bg-[#bbbbbb] shadow-[inset_0_0_0_2px_white]" />
                        <span className="pl-2"><Radio name="calc" label="统计模式" tone="border-[#bcbcbc] bg-white" /></span>
                        <div className="ml-auto flex items-center gap-px pr-1 text-black">
                            <button className="h-[19px] w-[46px] border border-[#0078d7] bg-[#e5f1fb]">方案》</button>
                            <div className="flex">
                                {[...Array(10)].map((_, i) => (
                                    <button key={i} className={`h-[19px] w-[17px] ${i === 0 ? orange : "border border-[#adadad] bg-[#f8f8f8]"}`}>{i + 1}</button>
                                ))}
                            </div>
                            <button className="h-[19px] w-8 border border-[#adadad] bg-[#f8f8f8]">同屏</button>
                        </div>
                    </div>
                    <div className="flex grow bg-black">
                        <div className="grid grow grid-cols-[repeat(5,372fr)_368fr] grid-rows-3">
                            {charts.map((c) => <KChart key={c.code} chart={c} />)}
                            <div className="bg-[#404040]" />
                        </div>
                        <DrawTools />
                    </div>
                    <IndicatorBar />
                </div>
                <RightPanel />
            </main>
            <footer className="flex h-[23px] items-center gap-3 border-t border-white px-1">
                <span className="mr-auto">就绪</span>
                <span>开奖数据同步中</span>
                <span>最新开奖：2023034期 【90183】</span>
                <span>正在进行：2023035期</span>
                <span>剩余时间：</span>
                <span>22:47:28</span>
            </footer>
            <div className="flex h-2 overflow-hidden bg-[#050a10]">
                <span className="mt-[3px] ml-[50px] w-[170px] bg-white" />
                <span className="mt-[3px] w-[78px] bg-[#4e6ef2]" />
                <span className="ml-auto w-[154px] bg-[#34383d]" />
                <span className="w-[402px] pl-72 text-white">21:57:01</span>
            </div>
            <div className="absolute top-[518px] right-0.5 flex h-[65px] w-2 flex-col overflow-hidden rounded-full">
                <span className="h-[37px] bg-[#4c4c66]" />
                <span className="grow bg-linear-to-b from-[#60f090] to-[#30e8f0]" />
            </div>
        </div>
    );
};

export default App;
